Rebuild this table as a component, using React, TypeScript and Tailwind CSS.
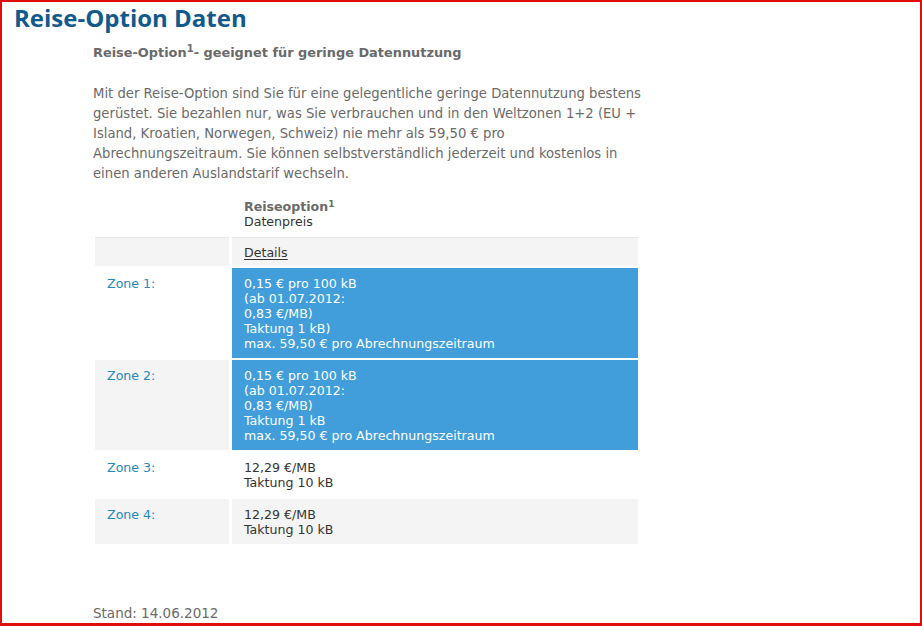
import React from "react";

const zones = [
  {
    label: "Zone 1:",
    lines: [
      "0,15 € pro 100 kB",
      "(ab 01.07.2012:",
      "0,83 €/MB)",
      "Taktung 1 kB)",
      "max. 59,50 € pro Abrechnungszeitraum",
    ],
    blue: true,
  },
  {
    label: "Zone 2:",
    lines: [
      "0,15 € pro 100 kB",
      "(ab 01.07.2012:",
      "0,83 €/MB)",
      "Taktung 1 kB",
      "max. 59,50 € pro Abrechnungszeitraum",
    ],
    blue: true,
  },
  { label: "Zone 3:", lines: ["12,29 €/MB", "Taktung 10 kB"], blue: false },
  { label: "Zone 4:", lines: ["12,29 €/MB", "Taktung 10 kB"], blue: false },
];

export default function App() {
  return (
    <div className="w-[922px] h-[626px] bg-white border-2 border-b-[3px] border-[#e00d0d] overflow-hidden font-['DejaVu_Sans',sans-serif] text-[13px] text-[#6a6a6a]">
      <h1 className="pl-3 pt-[2px] text-[24px] leading-[28px] font-bold text-[#12598c] font-['Open_Sans','DejaVu_Sans',sans-serif]">
        Reise-Option Daten
      </h1>

      <div className="pl-[91px]">
        <h2 className="mt-[13px] font-bold leading-[16px] text-[12.9px]">
          Reise-Option<sup className="text-[10px]">1</sup>- geeignet für geringe Datennutzung
        </h2>

        <p className="mt-[23px] whitespace-nowrap leading-[20px] text-[13.2px]">
          Mit der Reise-Option sind Sie für eine gelegentliche geringe Datennutzung bestens
          <br />
          gerüstet. Sie bezahlen nur, was Sie verbrauchen und in den Weltzonen 1+2 (EU +
          <br />
          Island, Kroatien, Norwegen, Schweiz) nie mehr als 59,50 € pro
          <br />
          Abrechnungszeitraum. Sie können selbstverständlich jederzeit und kostenlos in
          <br />
          einen anderen Auslandstarif wechseln.
        </p>

        <table className="mt-[7px] -ml-px border-separate border-spacing-x-[3px] border-spacing-y-[2px] leading-[15px] text-[12.6px]">
          <thead>
            <tr>
              <th className="w-[134px]"></th>
              <th className="w-[406px] px-3 pt-[6px] pb-[6px] text-left font-normal">
                <span className="font-bold">
                  Reiseoption<sup className="text-[9px]">1</sup>
                </span>
                <br />
                <span className="text-[#333]">Datenpreis</span>
              </th>
            </tr>
          </thead>
          <tbody>
            <tr>
              <td className="bg-[#f4f4f4] border-t border-[#e6e6e6]"></td>
              <td className="bg-[#f4f4f4] border-t border-[#e6e6e6] px-3 pt-[7px] pb-[6px] text-[#333]">
                <span className="underline underline-offset-2">Details</span>
              </td>
            </tr>
            {zones.map((z, i) => (
              <tr key={z.label}>
                <td
                  className={`align-top px-3 pt-[8px] pb-[7px] text-[#2389bf] ${
                    i % 2 === 1 ? "bg-[#f4f4f4]" : "bg-white"
                  }`}
                >
                  {z.label}
                </td>
                <td
                  className={`align-top px-3 pt-[8px] pb-[7px] ${
                    z.blue
                      ? "bg-[#419edb] text-white"
                      : i % 2 === 1
                        ? "bg-[#f4f4f4] text-[#333]"
                        : "bg-white text-[#333]"
                  }`}
                >
                  {z.lines.map((l) => (
                    <div key={l}>{l}</div>
                  ))}
                </td>
              </tr>
            ))}
          </tbody>
        </table>

        <p className="mt-[59px] leading-[16px] text-[13.5px]">Stand: 14.06.2012</p>
      </div>
    </div>
  );
}
